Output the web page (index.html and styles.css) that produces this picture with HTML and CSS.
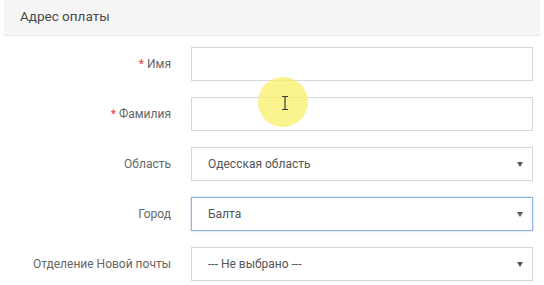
FILE: index.html
```html
<!DOCTYPE html>
<html lang="ru">
  <head>
    <meta charset="UTF-8" />
    <meta name="viewport" content="width=device-width, initial-scale=1.0" />
    <title>Адрес оплаты</title>
    <link rel="stylesheet" href="styles.css">
  </head>
  <body>
    <div class="checkout">
      <div class="panel-heading">Адрес оплаты</div>

      <div class="form">
        <div class="row">
          <label class="label"><span class="req">*</span> Имя</label>
          <div class="field"><input class="input" type="text" /></div>
        </div>
        <div class="row">
          <label class="label"><span class="req">*</span> Фамилия</label>
          <div class="field"><input class="input" type="text" /></div>
        </div>
        <div class="row">
          <label class="label">Область</label>
          <div class="field">
            <div class="select">Одесская область<span class="caret"></span></div>
          </div>
        </div>
        <div class="row">
          <label class="label">Город</label>
          <div class="field">
            <div class="select focused">Балта<span class="caret"></span></div>
          </div>
        </div>
        <div class="row">
          <label class="label">Отделение Новой почты</label>
          <div class="field">
            <div class="select">--- Не выбрано ---<span class="caret"></span></div>
          </div>
        </div>
      </div>

      <div class="cursor-hl">
        <svg width="8" height="16" viewBox="0 0 8 16">
          <path d="M1 1.5h6M4 1.5v13M1 14.5h6" stroke="#3a3a3a" stroke-width="1.2" fill="none" />
        </svg>
      </div>
    </div>
  </body>
</html>
```

FILE: styles.css
```css
body {
  margin: 0;
  font-family: Roboto, "Liberation Sans", Arial, sans-serif;
  background: #fff;
}
.checkout {
  position: relative;
  width: 544px;
  height: 285px;
  overflow: hidden;
}
.panel-heading {
  margin: 0 4px;
  height: 35px;
  line-height: 33px;
  padding-left: 16px;
  background: #f5f5f5;
  border-bottom: 1px solid #e9e9e9;
  font-size: 13.5px;
  color: #4a4a4a;
}
.form {
  padding-top: 11px;
}
.row {
  display: flex;
  align-items: center;
  margin-bottom: 16px;
}
.label {
  width: 171px;
  text-align: right;
  font-size: 12px;
  color: #666;
  padding-right: 20px;
}
.req {
  color: #e0463c;
}
.field {
  width: 342px;
}
.input,
.select {
  box-sizing: border-box;
  display: block;
  width: 100%;
  height: 34px;
  border: 1px solid #d6d6d6;
  background: #fff;
  margin: 0;
  font: inherit;
}
.select {
  position: relative;
  line-height: 32px;
  padding-left: 16px;
  font-size: 12px;
  color: #555;
}
.select.focused {
  border-color: #8fb3dc;
  box-shadow: 0 0 2px rgba(102, 155, 220, 0.5);
}
.caret {
  position: absolute;
  right: 9px;
  top: 14px;
  width: 0;
  height: 0;
  border-left: 3px solid transparent;
  border-right: 3px solid transparent;
  border-top: 5px solid #555;
}
.cursor-hl {
  position: absolute;
  left: 258px;
  top: 77px;
  width: 50px;
  height: 50px;
  border-radius: 50%;
  background: rgba(250, 240, 110, 0.78);
  display: flex;
  align-items: center;
  justify-content: center;
}
.cursor-hl svg {
  margin-left: 3px;
  margin-top: 2px;
}
```
